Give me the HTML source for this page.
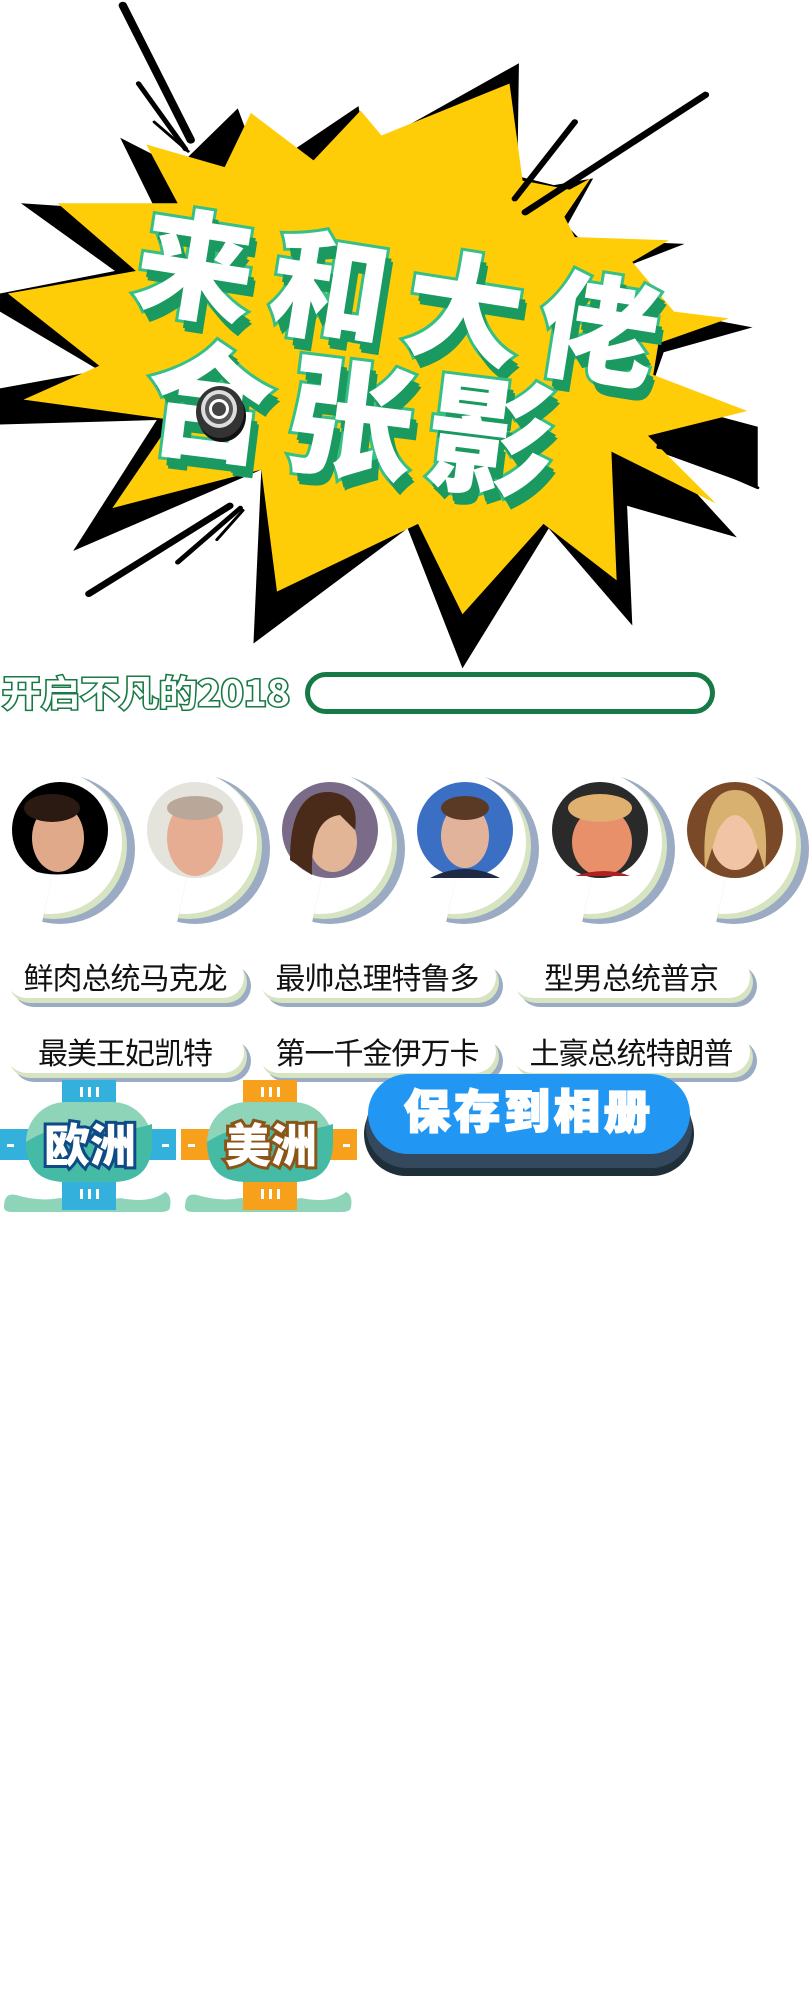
<!DOCTYPE html>
<html><head><meta charset="utf-8"><style>
*{margin:0;padding:0;box-sizing:border-box}
body{width:810px;height:2000px;background:#fff;position:relative;overflow:hidden;font-family:"Liberation Sans","Noto Sans CJK SC",sans-serif}
.abs{position:absolute}
.title{position:absolute;font-family:"Noto Sans CJK SC",sans-serif;font-weight:900;color:#fff;-webkit-text-stroke:6px #36bf87;paint-order:stroke fill;text-shadow:6px 8px 0 #1a9a60,8px 11px 0 #1a9a60;white-space:nowrap}
.pill{position:absolute;height:42px;border-radius:0 22px 22px 22px;background:#fff;box-shadow:3px 5px 0 #d6e4c2,7px 9px 0 #9aabc3;font-family:"Noto Sans CJK SC",sans-serif;font-size:30px;color:#111;text-align:center;line-height:40px;font-weight:400;white-space:nowrap;letter-spacing:-1px}
</style></head><body>
<svg class="abs" style="left:0;top:0" width="810" height="700" viewBox="0 0 1550 1550" preserveAspectRatio="none">
<polygon fill="#000" points="455,240 500,380 686,235 700,330 993,140 990,390 1060,410 1135,395 1085,500 1110,530 1310,540 1210,585 1280,690 1440,725 1270,780 1240,880 1450,945 1450,1080 1260,1000 1410,1190 1200,1120 1210,1385 1050,1170 885,1480 780,1170 485,1425 500,1040 140,1220 300,930 0,940 0,860 190,820 0,690 0,650 220,600 40,450 300,470 230,305 340,370"/>
<polygon fill="#ffcc08" points="480,250 600,355 690,245 730,300 975,185 1000,400 1090,420 1130,395 1080,480 1100,525 1280,532 1210,580 1290,690 1395,705 1260,760 1250,830 1430,910 1240,965 1370,1115 1170,1000 1180,1285 1040,1160 885,1360 800,1160 530,1310 500,1040 215,1125 330,930 45,885 190,810 15,650 260,600 110,450 340,450 280,320 430,370"/>
<g stroke="#000" stroke-linecap="round" fill="none">
<line x1="235" y1="12" x2="365" y2="310" stroke-width="16"/>
<line x1="265" y1="185" x2="355" y2="330" stroke-width="10"/>
<line x1="295" y1="270" x2="360" y2="335" stroke-width="6"/>
<line x1="1350" y1="210" x2="1005" y2="470" stroke-width="14"/>
<line x1="1100" y1="270" x2="985" y2="440" stroke-width="12"/>
<line x1="1255" y1="968" x2="1345" y2="970" stroke-width="6"/>
<line x1="1260" y1="990" x2="1430" y2="1015" stroke-width="8"/>
<line x1="1260" y1="985" x2="1450" y2="1080" stroke-width="6"/>
<line x1="440" y1="1120" x2="170" y2="1315" stroke-width="14"/>
<line x1="460" y1="1125" x2="340" y2="1245" stroke-width="10"/>
<line x1="465" y1="1130" x2="415" y2="1195" stroke-width="6"/>
</g>
</svg>
<div class="title" style="left:152px;top:165px;font-size:118px;letter-spacing:18px;transform:rotate(9deg);transform-origin:0 0">来和大佬</div>
<div class="title" style="left:158px;top:295px;font-size:128px;letter-spacing:14px;transform:rotate(7deg);transform-origin:0 0">合张影</div>
<div class="abs" style="left:196px;top:386px;width:48px;height:52px;border-radius:50%;background:#333;box-shadow:2px 4px 0 #111"></div>
<div class="abs" style="left:201px;top:390px;width:36px;height:38px;border-radius:50%;border:4px solid #ddd;background:#555"></div>
<div class="abs" style="left:209px;top:399px;width:20px;height:20px;border-radius:50%;border:3px solid #fff;background:#444"></div>

<svg class="abs" style="left:0;top:664px" width="300" height="56">
<text x="2" y="42" textLength="288" lengthAdjust="spacingAndGlyphs" font-family="Noto Sans CJK SC" font-weight="700" font-size="36" fill="#fff" stroke="#1a7a45" stroke-width="3" paint-order="stroke">开启不凡的2018</text>
</svg>
<div class="abs" style="left:305px;top:672px;width:410px;height:42px;border:5px solid #167a45;border-radius:21px"></div>

<svg class="abs" style="left:0;top:770px" width="810" height="170" viewBox="0 770 810 170">
<defs><clipPath id="c"><polygon points="75,770 145,770 145,932 40,932"/></clipPath></defs>
<g id="av">
<g clip-path="url(#c)">
<circle cx="60" cy="849" r="75" fill="#9aabc3"/>
<circle cx="54" cy="846" r="73" fill="#d6e4c2"/>
<circle cx="50" cy="842" r="72" fill="#fff"/>
</g>
</g>
<use href="#av" x="135"/><use href="#av" x="270"/><use href="#av" x="404"/><use href="#av" x="540"/><use href="#av" x="674"/>
<circle cx="60" cy="830" r="48" fill="#000"/><ellipse cx="58" cy="838" rx="26" ry="34" fill="#e0a98a"/><ellipse cx="52" cy="808" rx="28" ry="14" fill="#2a1a12"/><path d="M30 870 Q60 880 92 868 L85 878 L35 878Z" fill="#fff"/>
<circle cx="195" cy="830" r="48" fill="#e4e4dc"/><ellipse cx="195" cy="838" rx="28" ry="38" fill="#e6ad92"/><ellipse cx="195" cy="808" rx="28" ry="12" fill="#b9a79a"/>
<circle cx="330" cy="830" r="48" fill="#7a6c88"/><ellipse cx="333" cy="842" rx="24" ry="30" fill="#e2b596"/><path d="M290 860 Q290 790 330 792 Q360 795 355 830 L340 815 Q310 818 312 875 Z" fill="#4a2a18"/>
<circle cx="465" cy="830" r="48" fill="#3a6fc4"/><ellipse cx="465" cy="836" rx="24" ry="32" fill="#e1b39a"/><ellipse cx="465" cy="808" rx="24" ry="12" fill="#5a3a25"/><path d="M430 878 Q465 860 500 878Z" fill="#1f2a45"/>
<circle cx="600" cy="830" r="48" fill="#2a2a2a"/><ellipse cx="602" cy="842" rx="30" ry="34" fill="#e8906a"/><ellipse cx="600" cy="808" rx="32" ry="14" fill="#e0b070"/><path d="M575 876 Q605 866 630 876Z" fill="#b02020"/>
<circle cx="735" cy="830" r="48" fill="#7a4a28"/><ellipse cx="735" cy="838" rx="24" ry="32" fill="#f0c4a4"/><path d="M705 870 Q700 790 735 790 Q772 790 765 870 L752 830 Q735 800 718 830Z" fill="#d8b070"/>
</svg>

<div class="pill" style="left:6px;top:956px;width:238px">鲜肉总统马克龙</div>
<div class="pill" style="left:258px;top:956px;width:238px">最帅总理特鲁多</div>
<div class="pill" style="left:512px;top:956px;width:238px">型男总统普京</div>
<div class="pill" style="left:6px;top:1031px;width:238px">最美王妃凯特</div>
<div class="pill" style="left:258px;top:1031px;width:238px">第一千金伊万卡</div>
<div class="pill" style="left:512px;top:1031px;width:238px">土豪总统特朗普</div>

<svg class="abs" style="left:0;top:1080px" width="360" height="135" viewBox="0 0 360 135">
<g id="badge">
<path d="M4 127 Q4 112 16 115 Q40 122 60 118 Q90 124 120 118 Q150 124 165 112 Q172 115 170 127 Q170 132 160 132 L12 132 Q4 132 4 127Z" fill="#8dd4b8"/>
<rect x="62" y="0" width="54" height="130" fill="#33b0dc"/>
<rect x="0" y="49" width="176" height="31" fill="#33b0dc"/>
<rect x="26" y="22" width="126" height="80" rx="40" fill="#8dd4b8"/>
<path d="M26 62 Q60 40 100 48 Q130 52 152 44 L152 62 Q152 102 112 102 L66 102 Q26 102 26 62Z" fill="#45bba6"/>
<g fill="#fff"><rect x="80" y="7" width="3" height="10"/><rect x="88" y="7" width="3" height="10"/><rect x="96" y="7" width="3" height="10"/><rect x="80" y="109" width="3" height="10"/><rect x="88" y="109" width="3" height="10"/><rect x="96" y="109" width="3" height="10"/><rect x="7" y="64" width="7" height="3"/><rect x="162" y="64" width="7" height="3"/></g>
</g>
<g transform="translate(181,0)">
<path d="M4 127 Q4 112 16 115 Q40 122 60 118 Q90 124 120 118 Q150 124 165 112 Q172 115 170 127 Q170 132 160 132 L12 132 Q4 132 4 127Z" fill="#8dd4b8"/>
<rect x="62" y="0" width="54" height="130" fill="#f7a01c"/>
<rect x="0" y="49" width="176" height="31" fill="#f7a01c"/>
<rect x="26" y="22" width="126" height="80" rx="40" fill="#8dd4b8"/>
<path d="M26 62 Q60 40 100 48 Q130 52 152 44 L152 62 Q152 102 112 102 L66 102 Q26 102 26 62Z" fill="#45bba6"/>
<g fill="#fff"><rect x="80" y="7" width="3" height="10"/><rect x="88" y="7" width="3" height="10"/><rect x="96" y="7" width="3" height="10"/><rect x="80" y="109" width="3" height="10"/><rect x="88" y="109" width="3" height="10"/><rect x="96" y="109" width="3" height="10"/><rect x="7" y="64" width="7" height="3"/><rect x="162" y="64" width="7" height="3"/></g>
</g>
<text x="90" y="82" text-anchor="middle" font-family="Noto Sans CJK SC" font-weight="900" font-size="46" fill="#fff" stroke="#0e4a86" stroke-width="6" paint-order="stroke">欧洲</text>
<text x="271" y="82" text-anchor="middle" font-family="Noto Sans CJK SC" font-weight="900" font-size="46" fill="#fff" stroke="#8a5516" stroke-width="6" paint-order="stroke">美洲</text>
</svg>

<div class="abs" style="left:364px;top:1092px;width:330px;height:84px;border-radius:42px;background:#1f2f3a"></div>
<div class="abs" style="left:366px;top:1086px;width:326px;height:82px;border-radius:41px;background:#34495e"></div>
<div class="abs" style="left:368px;top:1074px;width:322px;height:80px;border-radius:40px;background:#2196f3;color:#fff;font-family:'Noto Sans CJK SC',sans-serif;font-weight:900;font-size:46px;text-align:center;line-height:70px;letter-spacing:4px;-webkit-text-stroke:2px #fff">保存到相册</div>
</body></html>
